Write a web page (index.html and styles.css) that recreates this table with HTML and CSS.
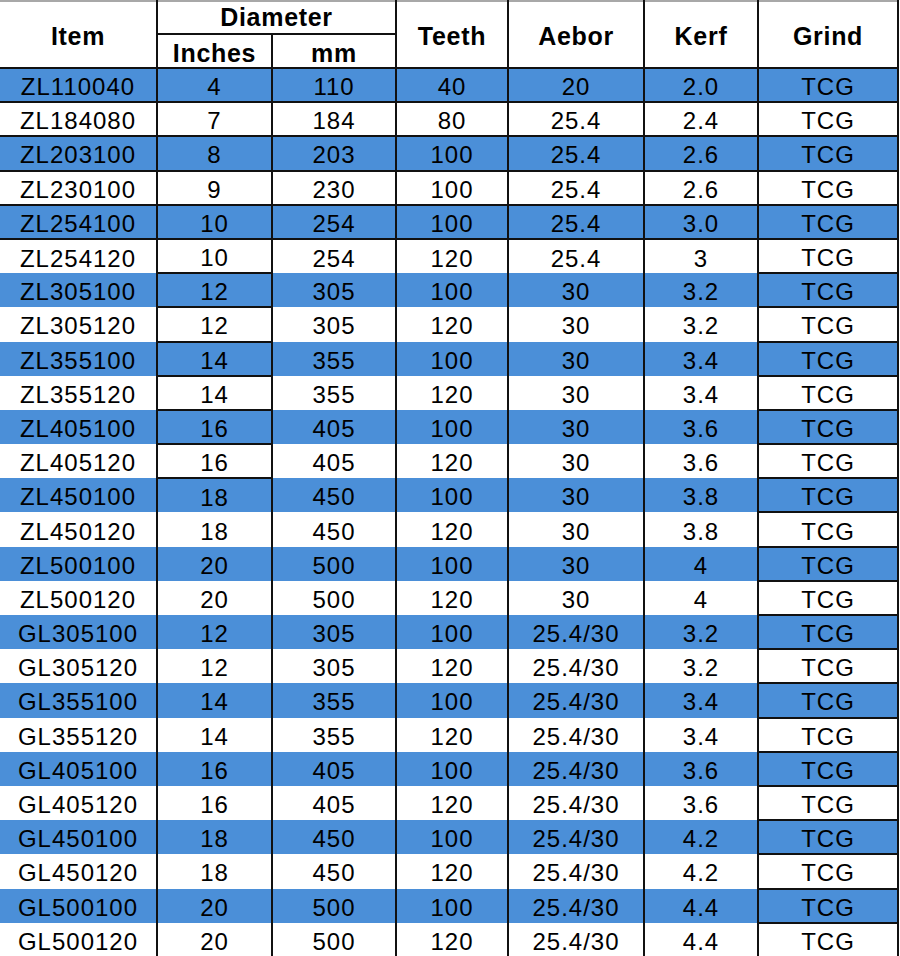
FILE: index.html
```html
<!DOCTYPE html>
<html>
<head>
<meta charset="utf-8">
<link rel="stylesheet" href="styles.css">
</head>
<body>
<table class="spec">
  <colgroup>
    <col class="c-item"><col class="c-in"><col class="c-mm"><col class="c-teeth"><col class="c-arbor"><col class="c-kerf"><col class="c-grind">
  </colgroup>
  <thead>
    <tr class="h1">
      <th rowspan="2" class="first">Item</th>
      <th colspan="2" class="dia">Diameter</th>
      <th rowspan="2">Teeth</th>
      <th rowspan="2">Aebor</th>
      <th rowspan="2">Kerf</th>
      <th rowspan="2" class="g">Grind</th>
    </tr>
    <tr class="h2">
      <th class="sub">Inches</th>
      <th class="sub">mm</th>
    </tr>
  </thead>
  <tbody>
    <tr class="b all"><td class="first">ZL110040</td><td>4</td><td>110</td><td>40</td><td>20</td><td>2.0</td><td class="g">TCG</td></tr>
    <tr class="all"><td class="first">ZL184080</td><td>7</td><td>184</td><td>80</td><td>25.4</td><td>2.4</td><td class="g">TCG</td></tr>
    <tr class="b all"><td class="first">ZL203100</td><td>8</td><td>203</td><td>100</td><td>25.4</td><td>2.6</td><td class="g">TCG</td></tr>
    <tr class="all"><td class="first">ZL230100</td><td>9</td><td>230</td><td>100</td><td>25.4</td><td>2.6</td><td class="g">TCG</td></tr>
    <tr class="b all"><td class="first">ZL254100</td><td>10</td><td>254</td><td>100</td><td>25.4</td><td>3.0</td><td class="g">TCG</td></tr>
    <tr><td class="first">ZL254120</td><td class="in">10</td><td>254</td><td>120</td><td>25.4</td><td>3</td><td class="g">TCG</td></tr>
    <tr class="b"><td class="first">ZL305100</td><td class="in">12</td><td>305</td><td>100</td><td>30</td><td>3.2</td><td class="g">TCG</td></tr>
    <tr><td class="first">ZL305120</td><td class="in">12</td><td>305</td><td>120</td><td>30</td><td>3.2</td><td class="g">TCG</td></tr>
    <tr class="b"><td class="first">ZL355100</td><td class="in">14</td><td>355</td><td>100</td><td>30</td><td>3.4</td><td class="g">TCG</td></tr>
    <tr><td class="first">ZL355120</td><td class="in">14</td><td>355</td><td>120</td><td>30</td><td>3.4</td><td class="g">TCG</td></tr>
    <tr class="b"><td class="first">ZL405100</td><td class="in">16</td><td>405</td><td>100</td><td>30</td><td>3.6</td><td class="g">TCG</td></tr>
    <tr><td class="first">ZL405120</td><td class="in">16</td><td>405</td><td>120</td><td>30</td><td>3.6</td><td class="g">TCG</td></tr>
    <tr class="b"><td class="first">ZL450100</td><td>18</td><td>450</td><td>100</td><td>30</td><td>3.8</td><td class="g">TCG</td></tr>
    <tr><td class="first">ZL450120</td><td>18</td><td>450</td><td>120</td><td>30</td><td>3.8</td><td class="g">TCG</td></tr>
    <tr class="b"><td class="first">ZL500100</td><td>20</td><td>500</td><td>100</td><td>30</td><td>4</td><td class="g">TCG</td></tr>
    <tr><td class="first">ZL500120</td><td>20</td><td>500</td><td>120</td><td>30</td><td>4</td><td class="g">TCG</td></tr>
    <tr class="b"><td class="first">GL305100</td><td>12</td><td>305</td><td>100</td><td>25.4/30</td><td>3.2</td><td class="g">TCG</td></tr>
    <tr><td class="first">GL305120</td><td>12</td><td>305</td><td>120</td><td>25.4/30</td><td>3.2</td><td class="g">TCG</td></tr>
    <tr class="b"><td class="first">GL355100</td><td>14</td><td>355</td><td>100</td><td>25.4/30</td><td>3.4</td><td class="g">TCG</td></tr>
    <tr><td class="first">GL355120</td><td>14</td><td>355</td><td>120</td><td>25.4/30</td><td>3.4</td><td class="g">TCG</td></tr>
    <tr class="b"><td class="first">GL405100</td><td>16</td><td>405</td><td>100</td><td>25.4/30</td><td>3.6</td><td class="g">TCG</td></tr>
    <tr><td class="first">GL405120</td><td>16</td><td>405</td><td>120</td><td>25.4/30</td><td>3.6</td><td class="g">TCG</td></tr>
    <tr class="b"><td class="first">GL450100</td><td>18</td><td>450</td><td>100</td><td>25.4/30</td><td>4.2</td><td class="g">TCG</td></tr>
    <tr><td class="first">GL450120</td><td>18</td><td>450</td><td>120</td><td>25.4/30</td><td>4.2</td><td class="g">TCG</td></tr>
    <tr class="b"><td class="first">GL500100</td><td>20</td><td>500</td><td>100</td><td>25.4/30</td><td>4.4</td><td class="g">TCG</td></tr>
    <tr><td class="first">GL500120</td><td>20</td><td>500</td><td>120</td><td>25.4/30</td><td>4.4</td><td class="g">TCG</td></tr>
  </tbody>
</table>
</body>
</html>
```

FILE: styles.css
```css
html, body {
  margin: 0;
  padding: 0;
  background: #ffffff;
}

.spec {
  border-collapse: collapse;
  table-layout: fixed;
  width: 898px;
  font-family: "Liberation Sans", Arial, sans-serif;
  color: #000;
}

.c-item { width: 157px; }
.c-in { width: 115px; }
.c-mm { width: 124px; }
.c-teeth { width: 112px; }
.c-arbor { width: 136px; }
.c-kerf { width: 114px; }
.c-grind { width: 140px; }

.spec th,
.spec td {
  padding: 0;
  text-align: center;
  vertical-align: middle;
  border-left: 2px solid #111;
  border-right: 2px solid #111;
  overflow: hidden;
  white-space: nowrap;
}

.spec th.first,
.spec td.first {
  border-left: none;
}

.spec th {
  font-weight: bold;
  font-size: 25px;
  letter-spacing: 0.7px;
  border-top: 2px solid #a8a8a8;
  border-bottom: 2px solid #111;
  padding-top: 2px;
  line-height: 28px;
}

.spec tr.h1 {
  height: 33px;
}

.spec tr.h2 {
  height: 34px;
}

.spec th.dia {
  border-bottom: 2px solid #111;
  padding-top: 0;
  padding-bottom: 2px;
}

.spec th.sub {
  border-top: 2px solid #111;
  padding-top: 4px;
}

.spec td {
  font-size: 24px;
  letter-spacing: 1px;
  height: 32px;
  padding-top: 4px;
  line-height: 28px;
  box-sizing: border-box;
}

.spec tbody tr {
  height: 34.2px;
}

.spec tr.b td {
  background: #4b8fd8;
}

.spec tr.all td {
  border-bottom: 2px solid #111;
}

.spec td.in {
  border-top: 2px solid #111;
  border-bottom: 2px solid #111;
}

.spec td.g {
  border-top: 2px solid #111;
  border-bottom: 2px solid #111;
}
```
